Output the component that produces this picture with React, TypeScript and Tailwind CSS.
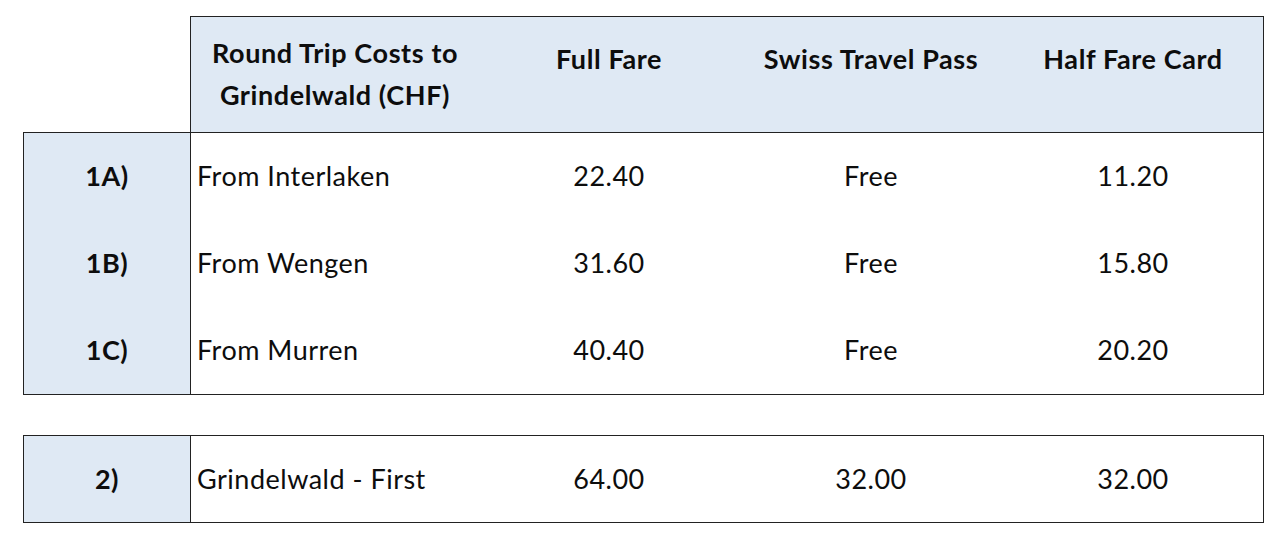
import React from "react";

const rows = [
  { label: "1A)", name: "From Interlaken", full: "22.40", pass: "Free", half: "11.20" },
  { label: "1B)", name: "From Wengen", full: "31.60", pass: "Free", half: "15.80" },
  { label: "1C)", name: "From Murren", full: "40.40", pass: "Free", half: "20.20" },
];

function DataRow({ name, full, pass, half }: { name: string; full: string; pass: string; half: string }) {
  return (
    <div className="flex h-[87px] items-center text-[27px] tracking-[0.5px]">
      <div className="w-[288px] pl-[6px]">{name}</div>
      <div className="w-[260px] text-center">{full}</div>
      <div className="w-[264px] text-center">{pass}</div>
      <div className="flex-1 text-center">{half}</div>
    </div>
  );
}

export default function App() {
  return (
    <div
      className="w-[1280px] h-[542px] bg-white text-[#0d0d0d] overflow-hidden"
      style={{ fontFamily: "Lato, 'Open Sans', sans-serif" }}
    >
      {/* Header */}
      <div className="ml-[190px] mt-[16px] w-[1074px] h-[116px] border border-b-0 border-[#222] bg-[#dfe9f4] flex font-bold text-[27px] leading-[42px] tracking-[0.6px]">
        <div className="w-[288px] pt-[15px] text-center">
          Round Trip Costs to
          <br />
          Grindelwald (CHF)
        </div>
        <div className="w-[260px] pt-[21px] text-center">Full Fare</div>
        <div className="w-[264px] pt-[21px] text-center">Swiss Travel Pass</div>
        <div className="flex-1 pt-[21px] text-center">Half Fare Card</div>
      </div>

      {/* Body */}
      <div className="ml-[23px] w-[1241px] border border-[#222] flex">
        <div className="w-[167px] bg-[#dfe9f4] border-r border-[#222] flex flex-col font-bold text-[27px] tracking-[0.5px]">
          {rows.map((r) => (
            <div key={r.label} className="h-[87px] flex items-center justify-center">
              {r.label}
            </div>
          ))}
        </div>
        <div className="flex-1 flex flex-col">
          {rows.map((r) => (
            <DataRow key={r.label} {...r} />
          ))}
        </div>
      </div>

      {/* Second table */}
      <div className="ml-[23px] mt-[40px] w-[1241px] border border-[#222] flex">
        <div className="w-[167px] h-[86px] bg-[#dfe9f4] border-r border-[#222] flex items-center justify-center font-bold text-[27px] tracking-[0.5px]">
          2)
        </div>
        <div className="flex-1">
          <div className="flex h-[86px] items-center text-[27px] tracking-[0.5px]">
            <div className="w-[288px] pl-[6px]">Grindelwald - First</div>
            <div className="w-[260px] text-center">64.00</div>
            <div className="w-[264px] text-center">32.00</div>
            <div className="flex-1 text-center">32.00</div>
          </div>
        </div>
      </div>
    </div>
  );
}
